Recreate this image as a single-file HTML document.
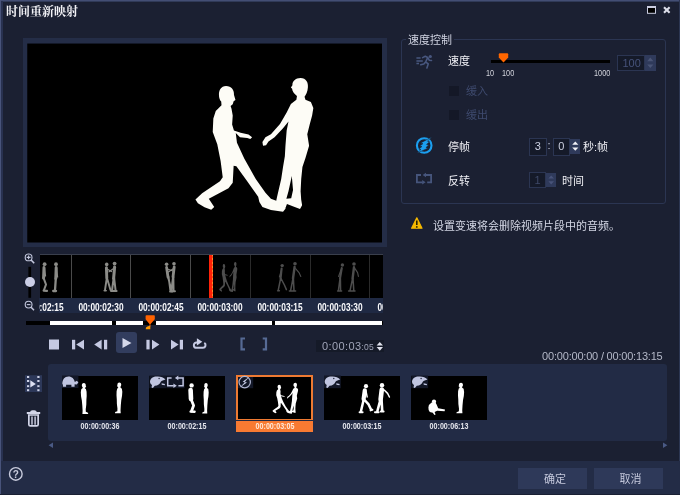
<!DOCTYPE html>
<html lang="zh-CN">
<head>
<meta charset="utf-8">
<title>时间重新映射</title>
<style>
*{margin:0;padding:0;box-sizing:border-box}
html,body{width:680px;height:495px;overflow:hidden;background:#1b2032}
body{position:relative;font-family:"Liberation Sans","Noto Sans CJK SC",sans-serif;color:#e4e6f0;font-size:11px}
.abs{position:absolute}
#win{position:absolute;left:0;top:0;width:680px;height:495px;background:#1b2032;overflow:hidden;will-change:transform}
#topb{left:0;top:0;width:680px;height:2px;background:linear-gradient(#434e74 0 1px,#303a58 1px 2px)}
#leftb{left:0;top:0;width:1px;height:495px;background:#48537a}
#leftb2{left:1px;top:1px;width:2px;height:460px;background:#283150}
#rightb{left:679px;top:0;width:1px;height:495px;background:#2c3652}
#title{left:6px;top:4px;font-family:"Liberation Serif","Noto Serif CJK SC",serif;font-weight:700;font-size:12px;line-height:16px;color:#f2f2f6;letter-spacing:0}
#frame{left:23px;top:38px;width:364px;height:209px;background:#242d47}
#screen{left:27px;top:43px;width:355px;height:200px;background:#000}
#strip{left:40px;top:254px;width:343px;height:44px;background:#000;border-top:1px solid #3a3f4c;overflow:hidden}
#lblrow{left:39px;top:298px;width:344px;height:15px;background:#1f2943;overflow:hidden}
.tc{position:absolute;top:3.5px;width:60px;text-align:center;font-weight:700;font-size:10px;line-height:11px;color:#fbfbfd;transform:scaleX(0.83);white-space:nowrap}
.dv{position:absolute;top:0;width:1px;height:44px;background:#4a4a4a}
.dv.d{background:#2a2a2a}
#pbar{left:26px;top:321px;width:357px;height:4px;background:#000}
.seg{position:absolute;top:0;height:4px;background:#fff}
.ctl{fill:#c5c9e2}
#playbg{left:116px;top:332px;width:21px;height:21px;background:#323d5e;border-radius:3px}
#tcbox{left:316px;top:340px;width:68px;height:12px;background:#151a28}
#tcbox span{position:absolute;left:6px;top:-1px;font-size:11px;line-height:14px;color:#a0a5b8;letter-spacing:0.4px;white-space:nowrap}
#tcbox small{font-size:8.5px;letter-spacing:0.2px}
#total{left:479.5px;top:349.5px;width:183px;text-align:right;font-size:11px;line-height:12px;color:#b4b8c8;white-space:nowrap;letter-spacing:-0.2px}
#clips{left:48px;top:364px;width:619px;height:77px;background:#222b45;border-radius:3px}
.th{position:absolute;top:375.5px;width:76px;height:44px;background:#000;overflow:hidden}
.cl{position:absolute;top:421px;width:76px;text-align:center;font-weight:700;font-size:9px;line-height:10px;color:#e4e5ec;transform:scaleX(0.79);white-space:nowrap}
#foot{left:1px;top:461px;width:679px;height:34px;background:#232c46}
.btn{position:absolute;top:468px;width:69px;height:21px;background:#2e3959;color:#c4c8dc;font-size:11px;line-height:23.5px;text-align:center;padding-left:5px;overflow:hidden}
#grp{left:401px;top:39px;width:265px;height:165px;border:1px solid #2b3552;border-radius:3px}
#leg{left:406px;top:34px;padding:0 2px;background:#1b2032;font-size:11px;line-height:13px;color:#cfd2e0}
.lab{position:absolute;font-size:11px;line-height:13px;color:#f0f0f5;white-space:nowrap}
.dis{color:#3e4a6e}
.num{position:absolute;font-size:8.5px;line-height:9px;color:#d4d5dd;transform:scaleX(0.86);transform-origin:0 0;white-space:nowrap}
.inp{position:absolute;background:#151a29;border:1px solid #2b3552;font-size:11px;text-align:center;color:#e0e2ec}
.spin{position:absolute;background:#2f3a5b}
.cb{position:absolute;width:10px;height:10px;background:#141827}
</style>
</head>
<body>
<div id="win">
<div class="abs" id="topb"></div>
<div class="abs" id="leftb"></div>
<div class="abs" id="leftb2"></div>
<div class="abs" id="rightb"></div>
<div class="abs" id="title">时间重新映射</div>
<svg class="abs" style="left:645px;top:4px" width="30" height="12" viewBox="645 4 30 12">
<rect x="647.5" y="7" width="8" height="6.3" fill="#000" stroke="#c9cce0" stroke-width="1"/>
<rect x="647" y="6" width="9" height="2" fill="#c9cce0"/>
<path d="M664,7.2 L669.6,12.8 M669.6,7.2 L664,12.8" stroke="#dcdeea" stroke-width="2.1" stroke-linecap="butt"/>
</svg>
<div class="abs" id="frame"></div>
<svg class="abs" style="left:23px;top:38px" width="364" height="209" viewBox="23 38 364 209">
<rect x="27.25" y="43.55" width="354.75" height="198.95" fill="#000"/>
<g transform="translate(180,70) scale(0.30303)" fill="#fdfcf6" filter="url(#bl)">
<path d="M152,53 C171,53 179,67 178,82 L183,99 L177,103 L174,113 L167,119 L170,128 L174,150 L172,180 L178,200 L200,207 L226,213 L238,222 L232,228 L222,224 L198,222 L184,208 L188,240 L212,292 L250,360 L282,405 L300,425 L340,440 L348,458 L340,468 L300,462 L272,452 L262,436 L258,418 L220,365 L186,318 L177,316 L174,372 L160,390 L95,425 L113,452 L103,461 L81,453 L59,440 L51,427 L73,407 L132,367 L141,354 L134,300 L123,245 L108,205 L110,160 L118,135 L137,116 L136,104 C125,95 123,53 152,53 Z"/>
<path fill-rule="evenodd" d="M398,26 C416,26 424,41 422,58 C421,72 416,82 411,88 L414,98 L432,106 L440,125 L436,150 L428,180 L420,212 L426,250 L414,290 L404,320 L400,360 L398,400 L400,428 L403,446 L396,459 L372,450 L353,442 L347,458 L330,462 L314,448 L320,420 L334,360 L340,320 L346,285 L348,250 L352,200 L358,170 L340,192 L312,222 L292,236 L284,248 L274,250 L272,238 L282,222 L300,212 L330,178 L352,140 L366,112 L384,98 L386,86 C377,78 370,70 370,62 L366,58 L371,50 C370,37 381,26 398,26 ZM369,350 L358,400 L351,425 L367,423 L373,396 Z"/>
</g>
<filter id="bl"><feGaussianBlur stdDeviation="1.2"/></filter>
</svg>
<div class="abs" id="grp"></div>
<div class="abs" id="leg">速度控制</div>
<div class="lab" style="left:448px;top:54.5px">速度</div>
<div class="abs" style="left:490.5px;top:60px;width:119px;height:3px;background:#000"></div>
<svg class="abs" style="left:497px;top:52px" width="13" height="12" viewBox="497 52 13 12"><path d="M499.8,53.2 H507.2 Q508.2,53.2 508.2,54.2 V57.6 L503.5,62.6 L498.8,57.6 V54.2 Q498.8,53.2 499.8,53.2 Z" fill="#ff6600"/></svg>
<div class="num" style="left:486px;top:69px">10</div>
<div class="num" style="left:502px;top:69px">100</div>
<div class="num" style="left:594.4px;top:69px">1000</div>
<div class="inp" style="left:617px;top:54.5px;width:28px;height:16px;line-height:15px;color:#46527a;font-size:11px;text-align:left;padding-left:4.5px">100</div>
<div class="spin" style="left:645px;top:55px;width:10.5px;height:15.5px"></div>
<svg class="abs" style="left:645px;top:55px" width="11" height="16" viewBox="0 0 11 16"><path d="M2.2,6.2 L5.3,2.6 L8.4,6.2 Z M2.2,9.4 L5.3,13 L8.4,9.4 Z" fill="#4a5576"/></svg>
<div class="cb" style="left:449px;top:85.5px"></div>
<div class="lab dis" style="left:466px;top:85px">缓入</div>
<div class="cb" style="left:449px;top:109.5px"></div>
<div class="lab dis" style="left:466px;top:109px">缓出</div>
<div class="lab" style="left:448px;top:141px">停帧</div>
<div class="inp" style="left:529px;top:138px;width:17.5px;height:17.5px;line-height:15.5px;color:#ccd0e0">3</div>
<div class="lab" style="left:547.6px;top:139.4px;color:#c8ccdc">:</div>
<div class="inp" style="left:553px;top:138px;width:16.5px;height:17.5px;line-height:15.5px;color:#ccd0e0">0</div>
<div class="spin" style="left:569.5px;top:138.6px;width:10.5px;height:15.2px"></div>
<svg class="abs" style="left:569.5px;top:138px" width="11" height="18" viewBox="0 0 11 18"><path d="M2.2,6.8 L5.3,3.4 L8.4,6.8 Z M2.2,9.4 L5.3,12.8 L8.4,9.4 Z" fill="#f0f0f6"/></svg>
<div class="lab" style="left:583px;top:140.5px">秒:帧</div>
<div class="lab" style="left:448px;top:174.5px">反转</div>
<div class="inp" style="left:529px;top:172px;width:17px;height:15.5px;line-height:15px;color:#3e4968">1</div>
<div class="spin" style="left:545.6px;top:172.5px;width:10.4px;height:14.5px"></div>
<svg class="abs" style="left:545.6px;top:172px" width="11" height="16" viewBox="0 0 11 16"><path d="M2.4,6.6 L5.2,3.4 L8,6.6 Z M2.4,9.2 L5.2,12.4 L8,9.2 Z" fill="#48537a"/></svg>
<div class="lab" style="left:562px;top:174.5px">时间</div>
<div class="lab" style="left:433px;top:220px;color:#d3d6e4">设置变速将会删除视频片段中的音频。</div>
<svg class="abs" style="left:410px;top:50px" width="30" height="150" viewBox="410 50 30 150">
<g fill="none" stroke="#48577f" stroke-linecap="round" stroke-linejoin="round">
<path d="M416.4,57.9 H420.6 M416.4,60.9 H422.8 M416.4,63.5 H419" stroke-width="1.5" stroke-linecap="butt"/>
<path d="M422.6,57.6 L425.3,56.3 L427.7,57.5 L425.6,62 L423.8,64 L420.8,64.7 M425.6,62 L428.3,63.8 L426.9,68 M427.7,57.5 L429.2,60.2 L431.5,60.5" stroke-width="1.6"/>
</g>
<circle cx="430.3" cy="56.5" r="1.6" fill="#48577f"/>
<circle cx="424.2" cy="145.5" r="7.3" fill="none" stroke="#1b9ff0" stroke-width="2.1"/>
<path d="M431.8,136.9 L420.8,142.9 L423,143.7 L419.7,145.9 L422,146.5 L418.9,148.9 L421,149.4 L416.9,153.2 L427.8,148.3 L425.9,147.6 L428.7,145 L426.5,144.4 L429.5,141.7 L427.5,141.2 Z" fill="#1b9ff0" stroke="#1b2032" stroke-width="0.5"/>
<g fill="none" stroke="#46557c" stroke-width="1.8">
<path d="M421,175 H416.9 V182.3 H422.6 M425.6,175 H431.1 V182.3 H427.2"/>
</g>
<path d="M426,172.7 L422.6,175 L426,177.3 Z M422.2,180 L425.6,182.3 L422.2,184.6 Z" fill="#46557c"/>
</svg>
<svg class="abs" style="left:410px;top:216px" width="16" height="14" viewBox="410 216 16 14">
<path d="M416.8,217.8 L422,228.2 H411.6 Z" fill="#f5b800" stroke="#f5b800" stroke-width="1.2" stroke-linejoin="round"/>
<path d="M416.8,220.6 V225" stroke="#2a2200" stroke-width="1.6"/><circle cx="416.8" cy="226.9" r="0.9" fill="#2a2200"/>
</svg>
<svg class="abs" style="left:22px;top:250px" width="16" height="62" viewBox="22 250 16 62">
<g fill="none" stroke="#c4c8de" stroke-width="1.1">
<circle cx="28.6" cy="257.4" r="3.4"/><path d="M31.1,260 L34.2,263.2" stroke-width="1.6"/>
<path d="M26.7,257.4 H30.5 M28.6,255.5 V259.3" stroke-width="1.1"/>
<circle cx="28.6" cy="304.6" r="3.4"/><path d="M31.1,307.2 L34,310.2" stroke-width="1.5"/>
<path d="M26.8,304.6 H30.4" stroke-width="1.1"/>
</g>
<rect x="28.4" y="266.8" width="2.7" height="31" fill="#000"/>
<circle cx="30" cy="282" r="5" fill="#cbcee6"/>
</svg>
<div class="abs" id="strip">
<div class="dv" style="left:30.5px"></div><div class="dv" style="left:90.0px"></div><div class="dv" style="left:149.8px"></div><div class="dv d" style="left:209.5px"></div><div class="dv d" style="left:269.5px"></div><div class="dv d" style="left:329.0px"></div>
<svg class="abs" style="left:0;top:0" width="343" height="44" viewBox="40 255 343 44">
<circle cx="44.6" cy="264.2" r="1.9" fill="#8c8c88"/><path d="M44,267.6 L43.6,278" fill="none" stroke="#8c8c88" stroke-width="3.0" stroke-linecap="round" stroke-linejoin="round"/><path d="M43.6,278 L46,284.5 L44,290 M43.6,290.6 L47,290.9" fill="none" stroke="#8c8c88" stroke-width="2.1" stroke-linecap="round" stroke-linejoin="round"/><path d="M44.5,268 L45.5,276" fill="none" stroke="#8c8c88" stroke-width="1.2" stroke-linecap="round" stroke-linejoin="round"/><circle cx="56" cy="264.2" r="1.9" fill="#8c8c88"/><path d="M56.2,267.6 L55.8,278.5" fill="none" stroke="#8c8c88" stroke-width="3.0" stroke-linecap="round" stroke-linejoin="round"/><path d="M55.8,278.5 L55,290.5 M53.2,291 L56,291" fill="none" stroke="#8c8c88" stroke-width="2.3" stroke-linecap="round" stroke-linejoin="round"/><path d="M56.6,268 L57.6,277" fill="none" stroke="#8c8c88" stroke-width="1.2" stroke-linecap="round" stroke-linejoin="round"/><circle cx="106.7" cy="264.4" r="1.8" fill="#8c8c88"/><path d="M106.4,267.6 L106.8,278" fill="none" stroke="#8c8c88" stroke-width="2.9" stroke-linecap="round" stroke-linejoin="round"/><path d="M106.8,278 L105,290 M107,278 L110.5,290 M104.4,290.6 L106,290.6" fill="none" stroke="#8c8c88" stroke-width="1.9" stroke-linecap="round" stroke-linejoin="round"/><path d="M107,269 L111.5,271.5" fill="none" stroke="#8c8c88" stroke-width="1.2" stroke-linecap="round" stroke-linejoin="round"/><circle cx="114.6" cy="263.6" r="1.9" fill="#8c8c88"/><path d="M114.6,267 L113.6,278.5" fill="none" stroke="#8c8c88" stroke-width="3.0" stroke-linecap="round" stroke-linejoin="round"/><path d="M113.6,278.5 L112,290.5 M114.2,278.5 L115.6,290.5 M111,291 L116.6,291" fill="none" stroke="#8c8c88" stroke-width="2.0" stroke-linecap="round" stroke-linejoin="round"/><path d="M113.6,268.5 L109,271.8" fill="none" stroke="#8c8c88" stroke-width="1.2" stroke-linecap="round" stroke-linejoin="round"/><circle cx="166.6" cy="264.2" r="1.8" fill="#8c8c88"/><path d="M166.6,267.4 L168,277" fill="none" stroke="#8c8c88" stroke-width="2.8" stroke-linecap="round" stroke-linejoin="round"/><path d="M168,277 L171.6,290.8 M168.6,277 L170.4,291 M170,291.6 L172.4,291.6" fill="none" stroke="#8c8c88" stroke-width="1.9" stroke-linecap="round" stroke-linejoin="round"/><path d="M167.4,269 L173,271" fill="none" stroke="#8c8c88" stroke-width="1.2" stroke-linecap="round" stroke-linejoin="round"/><circle cx="174" cy="263.8" r="1.8" fill="#8c8c88"/><path d="M174.2,267 L173,277" fill="none" stroke="#8c8c88" stroke-width="2.8" stroke-linecap="round" stroke-linejoin="round"/><path d="M173,277 L171.4,290.4 M173.4,277 L173.6,290.6 M171.6,291.2 L175,291.2" fill="none" stroke="#8c8c88" stroke-width="1.9" stroke-linecap="round" stroke-linejoin="round"/><path d="M173.6,268.6 L168.4,272" fill="none" stroke="#8c8c88" stroke-width="1.2" stroke-linecap="round" stroke-linejoin="round"/><g transform="translate(216.8,260.3) scale(0.0466,0.068)" fill="#4d4d4d"><path d="M152,53 C171,53 179,67 178,82 L183,99 L177,103 L174,113 L167,119 L170,128 L174,150 L172,180 L178,200 L200,207 L226,213 L238,222 L232,228 L222,224 L198,222 L184,208 L188,240 L212,292 L250,360 L282,405 L300,425 L340,440 L348,458 L340,468 L300,462 L272,452 L262,436 L258,418 L220,365 L186,318 L177,316 L174,372 L160,390 L95,425 L113,452 L103,461 L81,453 L59,440 L51,427 L73,407 L132,367 L141,354 L134,300 L123,245 L108,205 L110,160 L118,135 L137,116 L136,104 C125,95 123,53 152,53 Z"/><path fill-rule="evenodd" d="M398,26 C416,26 424,41 422,58 C421,72 416,82 411,88 L414,98 L432,106 L440,125 L436,150 L428,180 L420,212 L426,250 L414,290 L404,320 L400,360 L398,400 L400,428 L403,446 L396,459 L372,450 L353,442 L347,458 L330,462 L314,448 L320,420 L334,360 L340,320 L346,285 L348,250 L352,200 L358,170 L340,192 L312,222 L292,236 L284,248 L274,250 L272,238 L282,222 L300,212 L330,178 L352,140 L366,112 L384,98 L386,86 C377,78 370,70 370,62 L366,58 L371,50 C370,37 381,26 398,26 ZM369,350 L358,400 L351,425 L367,423 L373,396 Z"/></g><circle cx="282.2" cy="265.6" r="1.7" fill="#4d4d4d"/><path d="M281.6,268.6 L280.6,278.5" fill="none" stroke="#4d4d4d" stroke-width="2.1" stroke-linecap="round" stroke-linejoin="round"/><path d="M280.6,278.5 L278.2,290.4 M281,278.5 L284.4,285 L286.4,289.6 M277.6,290.8 L279.4,290.8" fill="none" stroke="#4d4d4d" stroke-width="1.5" stroke-linecap="round" stroke-linejoin="round"/><path d="M281.4,270 L279.4,277" fill="none" stroke="#4d4d4d" stroke-width="1.1" stroke-linecap="round" stroke-linejoin="round"/><circle cx="295" cy="263.8" r="1.8" fill="#4d4d4d"/><path d="M294.6,267 L293,278.5" fill="none" stroke="#4d4d4d" stroke-width="2.4" stroke-linecap="round" stroke-linejoin="round"/><path d="M293,278.5 L290.6,290.6 M293.4,278.5 L294,290.6 M289.4,291 L295.6,291" fill="none" stroke="#4d4d4d" stroke-width="1.5" stroke-linecap="round" stroke-linejoin="round"/><path d="M295.6,268.6 L299,272.6 L300.8,276.4" fill="none" stroke="#4d4d4d" stroke-width="1.1" stroke-linecap="round" stroke-linejoin="round"/><circle cx="342.4" cy="265" r="1.7" fill="#4d4d4d"/><path d="M341.8,268 L340,278.5" fill="none" stroke="#4d4d4d" stroke-width="2.1" stroke-linecap="round" stroke-linejoin="round"/><path d="M340,278.5 L338.4,290.6 M340.4,278.5 L340.6,290.6 M337.6,291 L341.6,291" fill="none" stroke="#4d4d4d" stroke-width="1.5" stroke-linecap="round" stroke-linejoin="round"/><path d="M341,269.6 L338.6,276.5" fill="none" stroke="#4d4d4d" stroke-width="1.1" stroke-linecap="round" stroke-linejoin="round"/><circle cx="354" cy="264" r="1.8" fill="#4d4d4d"/><path d="M354,267.2 L352.6,278.5" fill="none" stroke="#4d4d4d" stroke-width="2.4" stroke-linecap="round" stroke-linejoin="round"/><path d="M352.6,278.5 L350,290.6 M353,278.5 L353.8,290.6 M348.6,291 L355,291" fill="none" stroke="#4d4d4d" stroke-width="1.5" stroke-linecap="round" stroke-linejoin="round"/><path d="M355,268.6 L357.6,272.6 L358.4,276.4" fill="none" stroke="#4d4d4d" stroke-width="1.1" stroke-linecap="round" stroke-linejoin="round"/></svg>
<div class="abs" style="left:169px;top:-1px;width:3.4px;height:45px;background:#ff2208"></div><div class="abs" style="left:172.2px;top:-1px;width:1.2px;height:45px;background:repeating-linear-gradient(#ff8a28 0 2px,#ff4a18 2px 4px)"></div>
</div>
<div class="abs" id="lblrow"><div class="tc" style="left:-28.0px">00:00:02:15</div><div class="tc" style="left:32.0px">00:00:02:30</div><div class="tc" style="left:91.5px">00:00:02:45</div><div class="tc" style="left:151.3px">00:00:03:00</div><div class="tc" style="left:211.0px">00:00:03:15</div><div class="tc" style="left:271.0px">00:00:03:30</div><div class="tc" style="left:330.5px">00:00:03:45</div></div>
<div class="abs" id="pbar"><div class="seg" style="left:24px;width:61.5px"></div><div class="seg" style="left:90px;width:27px"></div><div class="seg" style="left:130.3px;width:116px"></div><div class="seg" style="left:249px;width:107.4px"></div></div>
<svg class="abs" style="left:144px;top:314px" width="13" height="17" viewBox="144 314 13 17">
<path d="M146.4,315.2 H154 Q154.8,315.2 154.8,316 V319.3 L150.4,324.3 V326.4 L149.6,326.4 V324.3 L145.6,319.3 V316 Q145.6,315.2 146.4,315.2 Z" fill="#ff6200"/>
<path d="M150.3,325.4 L147.4,326.6 Q145.5,327.4 145.7,329.3 L150.3,329.3 Z" fill="#ff9800"/>
</svg>
<div class="abs" id="playbg"></div>
<svg class="abs" style="left:45px;top:335px" width="230" height="18" viewBox="45 335 230 18">
<g class="ctl">
<rect x="49" y="339.5" width="10" height="10"/>
<rect x="72" y="339.8" width="3.2" height="9.6"/><path d="M84,339.8 V349.4 L76.2,344.6 Z"/>
<path d="M101.6,339.8 V349.4 L94.2,344.6 Z"/><rect x="104" y="339.8" width="3.2" height="9.6"/>
<path d="M122.5,338 L131.5,343 L122.5,348 Z" fill="#d5d8ea"/>
<rect x="146.4" y="339.8" width="3.2" height="9.6"/><path d="M152,339.8 V349.4 L159.4,344.6 Z"/>
<path d="M171,339.8 V349.4 L178.6,344.6 Z"/><rect x="179.8" y="339.8" width="3.2" height="9.6"/>
</g>
<path d="M197.4,342.5 H196.5 A2.65,2.65 0 0 0 196.5,347.8 H202.9 A2.65,2.65 0 0 0 204.3,342.9" fill="none" stroke="#c5c9e2" stroke-width="2"/>
<path d="M196.9,338.2 L202.3,341.8 L196.9,345.4 Z" fill="#cdd1e8"/>
<g fill="none" stroke="#566a94" stroke-width="2.2">
<path d="M245,338.5 H241.5 V349.3 H245"/>
<path d="M262.7,338.5 H266 V349.3 H262.7"/>
</g>
</svg>
<div class="abs" id="tcbox"><span>0:00:03<small>:05</small></span></div>
<svg class="abs" style="left:375.6px;top:341px" width="8" height="11" viewBox="0 0 8 11"><path d="M0.6,4.5 L3.8,0.9 L7,4.5 Z M0.6,6.1 L3.8,9.7 L7,6.1 Z" fill="#dfe1ec"/></svg>
<div class="abs" id="total">00:00:00:00 / 00:00:13:15</div>
<div class="abs" id="clips"></div>
<svg class="abs" style="left:24px;top:374px" width="20" height="56" viewBox="24 374 20 56">
<rect x="25" y="375.2" width="17" height="16.8" fill="#2d3859"/>
<g fill="#cdd1e6"><rect x="27" y="376" width="2.2" height="2"/><rect x="27" y="380" width="2.2" height="2"/><rect x="27" y="385.2" width="2.2" height="2"/><rect x="27" y="389.2" width="2.2" height="2"/>
<rect x="37.3" y="376" width="2.2" height="2"/><rect x="37.3" y="380" width="2.2" height="2"/><rect x="37.3" y="385.2" width="2.2" height="2"/><rect x="37.3" y="389.2" width="2.2" height="2"/>
<path d="M30.3,380.3 L35.8,383.9 L30.3,387.5 Z" fill="#dde0f2"/></g>
<g fill="#1d2540"><rect x="27.4" y="378.4" width="1.4" height="1.2"/><rect x="27.4" y="382.6" width="1.4" height="2"/><rect x="27.4" y="387.6" width="1.4" height="1.2"/><rect x="37.7" y="378.4" width="1.4" height="1.2"/><rect x="37.7" y="382.6" width="1.4" height="2"/><rect x="37.7" y="387.6" width="1.4" height="1.2"/></g>
<g fill="none" stroke="#d2d5e8">
<path d="M28.85,415 H38.15 V424.4 Q38.15,425.95 36.6,425.95 H30.4 Q28.85,425.95 28.85,424.4 Z" stroke-width="1.7"/>
<path d="M32,416.5 V424.8 M35.1,416.5 V424.8" stroke-width="1.4"/>
<path d="M26.8,413.05 H40.2" stroke-width="2.1"/>
</g>
<path d="M29.9,412.2 Q30.4,410.2 32.4,410.2 H34.4 Q36.4,410.2 36.9,412.2 Z" fill="#d2d5e8"/>
</svg>
<div class="th" style="left:62.0px"></div><div class="cl" style="left:62.0px">00:00:00:36</div>
<div class="th" style="left:149.3px"></div><div class="cl" style="left:149.3px">00:00:02:15</div>
<div class="abs" style="left:236px;top:375px;width:77px;height:45px;background:#ee7a32"></div><div class="abs" style="left:238px;top:377px;width:73px;height:41.5px;background:#000"></div><div class="abs" style="left:236.4px;top:421.4px;width:76.4px;height:10.4px;background:#f87a32"></div><div class="cl" style="left:236.6px;color:#ffe8d8">00:00:03:05</div>
<div class="th" style="left:324.0px"></div><div class="cl" style="left:324.0px">00:00:03:15</div>
<div class="th" style="left:411.3px"></div><div class="cl" style="left:411.3px">00:00:06:13</div>
<svg class="abs" style="left:60px;top:374px" width="430" height="48" viewBox="60 374 430 48">
<path transform="translate(80.80,383.00) scale(0.948,1.030) rotate(0 3 15)" d="M3.1,0 C4.7,0 5.4,1.2 5.2,2.5 L5.7,3.4 L5.1,3.8 L4.8,4.6 L4.2,5 L5.4,5.8 L6.1,8.5 L6.2,12.5 L5.9,16.5 L5.8,21 L5.2,25.5 L5.3,28 L7.6,28.9 L7.8,30 L1.7,30 L1.9,27 L1.6,22 L1.1,17 L0.3,13 L0,9 L0.5,6 L2,4.9 L1.9,4 C0.6,3 0.9,0 3.1,0 Z" fill="#ffffff"/><path transform="translate(122.32,382.60) scale(-0.938,1.020) rotate(0 3 15)" d="M3.1,0 C4.7,0 5.4,1.2 5.2,2.5 L5.7,3.4 L5.1,3.8 L4.8,4.6 L4.2,5 L5.4,5.8 L6.1,8.5 L6.2,12.5 L5.9,16.5 L5.8,21 L5.2,25.5 L5.3,28 L7.6,28.9 L7.8,30 L1.7,30 L1.9,27 L1.6,22 L1.1,17 L0.3,13 L0,9 L0.5,6 L2,4.9 L1.9,4 C0.6,3 0.9,0 3.1,0 Z" fill="#ffffff"/><circle cx="191.6" cy="385.4" r="2.2" fill="#ffffff"/><path d="M190.6,390 L191,399" fill="none" stroke="#ffffff" stroke-width="4.6" stroke-linecap="round" stroke-linejoin="round"/><path d="M191,399 L193.6,405.5 L191.6,411" fill="none" stroke="#ffffff" stroke-width="2.8" stroke-linecap="round" stroke-linejoin="round"/><path d="M190.6,411.6 L194.6,411.8" fill="none" stroke="#ffffff" stroke-width="2.4" stroke-linecap="round" stroke-linejoin="round"/><path transform="translate(208.70,383.00) scale(-0.834,1.017) rotate(0 3 15)" d="M3.1,0 C4.7,0 5.4,1.2 5.2,2.5 L5.7,3.4 L5.1,3.8 L4.8,4.6 L4.2,5 L5.4,5.8 L6.1,8.5 L6.2,12.5 L5.9,16.5 L5.8,21 L5.2,25.5 L5.3,28 L7.6,28.9 L7.8,30 L1.7,30 L1.9,27 L1.6,22 L1.1,17 L0.3,13 L0,9 L0.5,6 L2,4.9 L1.9,4 C0.6,3 0.9,0 3.1,0 Z" fill="#ffffff"/><g transform="translate(269.1,381.05) scale(0.066,0.0698)" fill="#ffffff"><path d="M152,53 C171,53 179,67 178,82 L183,99 L177,103 L174,113 L167,119 L170,128 L174,150 L172,180 L178,200 L200,207 L226,213 L238,222 L232,228 L222,224 L198,222 L184,208 L188,240 L212,292 L250,360 L282,405 L300,425 L340,440 L348,458 L340,468 L300,462 L272,452 L262,436 L258,418 L220,365 L186,318 L177,316 L174,372 L160,390 L95,425 L113,452 L103,461 L81,453 L59,440 L51,427 L73,407 L132,367 L141,354 L134,300 L123,245 L108,205 L110,160 L118,135 L137,116 L136,104 C125,95 123,53 152,53 Z"/><path fill-rule="evenodd" d="M398,26 C416,26 424,41 422,58 C421,72 416,82 411,88 L414,98 L432,106 L440,125 L436,150 L428,180 L420,212 L426,250 L414,290 L404,320 L400,360 L398,400 L400,428 L403,446 L396,459 L372,450 L353,442 L347,458 L330,462 L314,448 L320,420 L334,360 L340,320 L346,285 L348,250 L352,200 L358,170 L340,192 L312,222 L292,236 L284,248 L274,250 L272,238 L282,222 L300,212 L330,178 L352,140 L366,112 L384,98 L386,86 C377,78 370,70 370,62 L366,58 L371,50 C370,37 381,26 398,26 ZM369,350 L358,400 L351,425 L367,423 L373,396 Z"/></g><circle cx="366" cy="386.2" r="2.1" fill="#ffffff"/><path d="M364.8,390.4 L363.6,399" fill="none" stroke="#ffffff" stroke-width="4.2" stroke-linecap="round" stroke-linejoin="round"/><path d="M363.6,400 L361,411 M364.6,400 L368.6,404.4 L371,409.6" fill="none" stroke="#ffffff" stroke-width="2.5" stroke-linecap="round" stroke-linejoin="round"/><path d="M359.6,412.2 L362.6,412.2 M370.6,410.4 L372.4,409.8" fill="none" stroke="#ffffff" stroke-width="2.0" stroke-linecap="round" stroke-linejoin="round"/><path d="M366,391 L367.2,397" fill="none" stroke="#ffffff" stroke-width="1.4" stroke-linecap="round" stroke-linejoin="round"/><circle cx="382" cy="385.2" r="2.2" fill="#ffffff"/><path d="M381.8,389.6 L380.6,399.6" fill="none" stroke="#ffffff" stroke-width="4.6" stroke-linecap="round" stroke-linejoin="round"/><path d="M380.2,400.6 L377.4,411 M381.6,400.6 L382.2,410.6" fill="none" stroke="#ffffff" stroke-width="2.6" stroke-linecap="round" stroke-linejoin="round"/><path d="M375,412.2 L378.6,412.2 M380.8,411.6 L383.6,411.6" fill="none" stroke="#ffffff" stroke-width="2.0" stroke-linecap="round" stroke-linejoin="round"/><path d="M384.2,390 L387.6,393.4 L389.4,397" fill="none" stroke="#ffffff" stroke-width="1.5" stroke-linecap="round" stroke-linejoin="round"/><path transform="translate(464.12,382.70) scale(-0.989,1.020) rotate(0 3 15)" d="M3.1,0 C4.7,0 5.4,1.2 5.2,2.5 L5.7,3.4 L5.1,3.8 L4.8,4.6 L4.2,5 L5.4,5.8 L6.1,8.5 L6.2,12.5 L5.9,16.5 L5.8,21 L5.2,25.5 L5.3,28 L7.6,28.9 L7.8,30 L1.7,30 L1.9,27 L1.6,22 L1.1,17 L0.3,13 L0,9 L0.5,6 L2,4.9 L1.9,4 C0.6,3 0.9,0 3.1,0 Z" fill="#ffffff"/><circle cx="434" cy="401.6" r="2.1" fill="#ffffff"/><path d="M431.6,402.4 q-2.8,1.6 -3.2,5 q-0.2,3 1.4,4.6 l3,0.8 l1.6,2.2 l1.2,-0.6 l-1,-2.4 l2.6,-1.2 l7.4,0.4 l0.4,-1.7 l-6.8,-1.3 l-1.6,-3.6 l-1.4,-2.6 Z" fill="#ffffff"/><rect x="62" y="375.5" width="16.4" height="12.5" fill="#121727"/><path transform="translate(0.1,0)" d="M62.2,384.2 C62.2,379.6 64.5,376.5 68.3,376.5 C72,376.5 74,379 74.7,381.9 L76.8,380.8 L78.3,382.6 L76.6,384.4 L74.5,384.2 L74.5,386.7 L71.3,386.7 L71.3,384.7 L66,384.7 L66,386.7 L62.8,386.7 L62.8,384.5 Z" fill="#c0c5e0"/><rect x="149.3" y="375.5" width="16.8" height="12.7" fill="#121727"/><g transform="translate(0.2,0)"><path d="M149.8,381.5 C150,378 153.5,376.2 157,376.4 C160,376.2 163.6,377.4 165.3,379.6 C163.4,380.5 161.4,380.7 160.6,381.7 C160,384 157.6,385.7 154.6,385.7 L152.7,387.9 L151.3,387.4 L151.8,385 C150.4,384.2 149.8,383 149.8,381.5 Z M161.4,383.3 L164.8,384 L164.5,385.2 L161.5,384.7 Z" fill="#c0c5e0"/><circle cx="158.9" cy="378.5" r="0.65" fill="#121727"/></g><rect x="324" y="375.5" width="16.8" height="12.7" fill="#121727"/><g transform="translate(174.9,0)"><path d="M149.8,381.5 C150,378 153.5,376.2 157,376.4 C160,376.2 163.6,377.4 165.3,379.6 C163.4,380.5 161.4,380.7 160.6,381.7 C160,384 157.6,385.7 154.6,385.7 L152.7,387.9 L151.3,387.4 L151.8,385 C150.4,384.2 149.8,383 149.8,381.5 Z M161.4,383.3 L164.8,384 L164.5,385.2 L161.5,384.7 Z" fill="#c0c5e0"/><circle cx="158.9" cy="378.5" r="0.65" fill="#121727"/></g><rect x="411.3" y="375.5" width="16.8" height="12.7" fill="#121727"/><g transform="translate(262.2,0)"><path d="M149.8,381.5 C150,378 153.5,376.2 157,376.4 C160,376.2 163.6,377.4 165.3,379.6 C163.4,380.5 161.4,380.7 160.6,381.7 C160,384 157.6,385.7 154.6,385.7 L152.7,387.9 L151.3,387.4 L151.8,385 C150.4,384.2 149.8,383 149.8,381.5 Z M161.4,383.3 L164.8,384 L164.5,385.2 L161.5,384.7 Z" fill="#c0c5e0"/><circle cx="158.9" cy="378.5" r="0.65" fill="#121727"/></g><rect x="238" y="377" width="15.2" height="11.2" fill="#121727"/><circle cx="244.7" cy="382.1" r="5.7" fill="none" stroke="#aeb4d0" stroke-width="1.2"/><path d="M249.6,376.4 L242.6,381.7 L244.8,382.3 L239.8,387.4 L247,382.6 L244.8,382 Z" fill="#c4c9e2"/><rect x="166.3" y="375.5" width="18.2" height="12.7" fill="#121727"/><g fill="none" stroke="#c0c5e0" stroke-width="1.5"><path d="M171.6,377.9 H167.7 V385.7 H173.8 M178,377.9 H183.1 V385.7 H178.4"/></g><path d="M178.3,375.6 L174.9,377.9 L178.3,380.2 Z M173.4,383.4 L176.8,385.7 L173.4,388 Z" fill="#c0c5e0"/></svg>
<svg class="abs" style="left:47px;top:442px" width="624" height="8" viewBox="47 442 624 8"><path d="M53,442.6 V448 L48.6,445.3 Z M663,442.6 V448 L667.4,445.3 Z" fill="#4a5a85"/></svg>
<div class="abs" id="foot"></div>
<svg class="abs" style="left:7px;top:465px" width="18" height="18" viewBox="7 465 18 18">
<circle cx="15.8" cy="473.9" r="6.3" fill="none" stroke="#c8cbdc" stroke-width="1.4"/>
<text x="15.9" y="477.6" text-anchor="middle" font-family="Liberation Sans, sans-serif" font-size="10" font-weight="700" fill="#c8cbdc">?</text>
</svg>
<div class="btn" style="left:518px">确定</div>
<div class="btn" style="left:593.5px">取消</div>
<div class="abs" style="left:0;top:494px;width:680px;height:1px;background:#1a2033"></div>
</div>
</body>
</html>
